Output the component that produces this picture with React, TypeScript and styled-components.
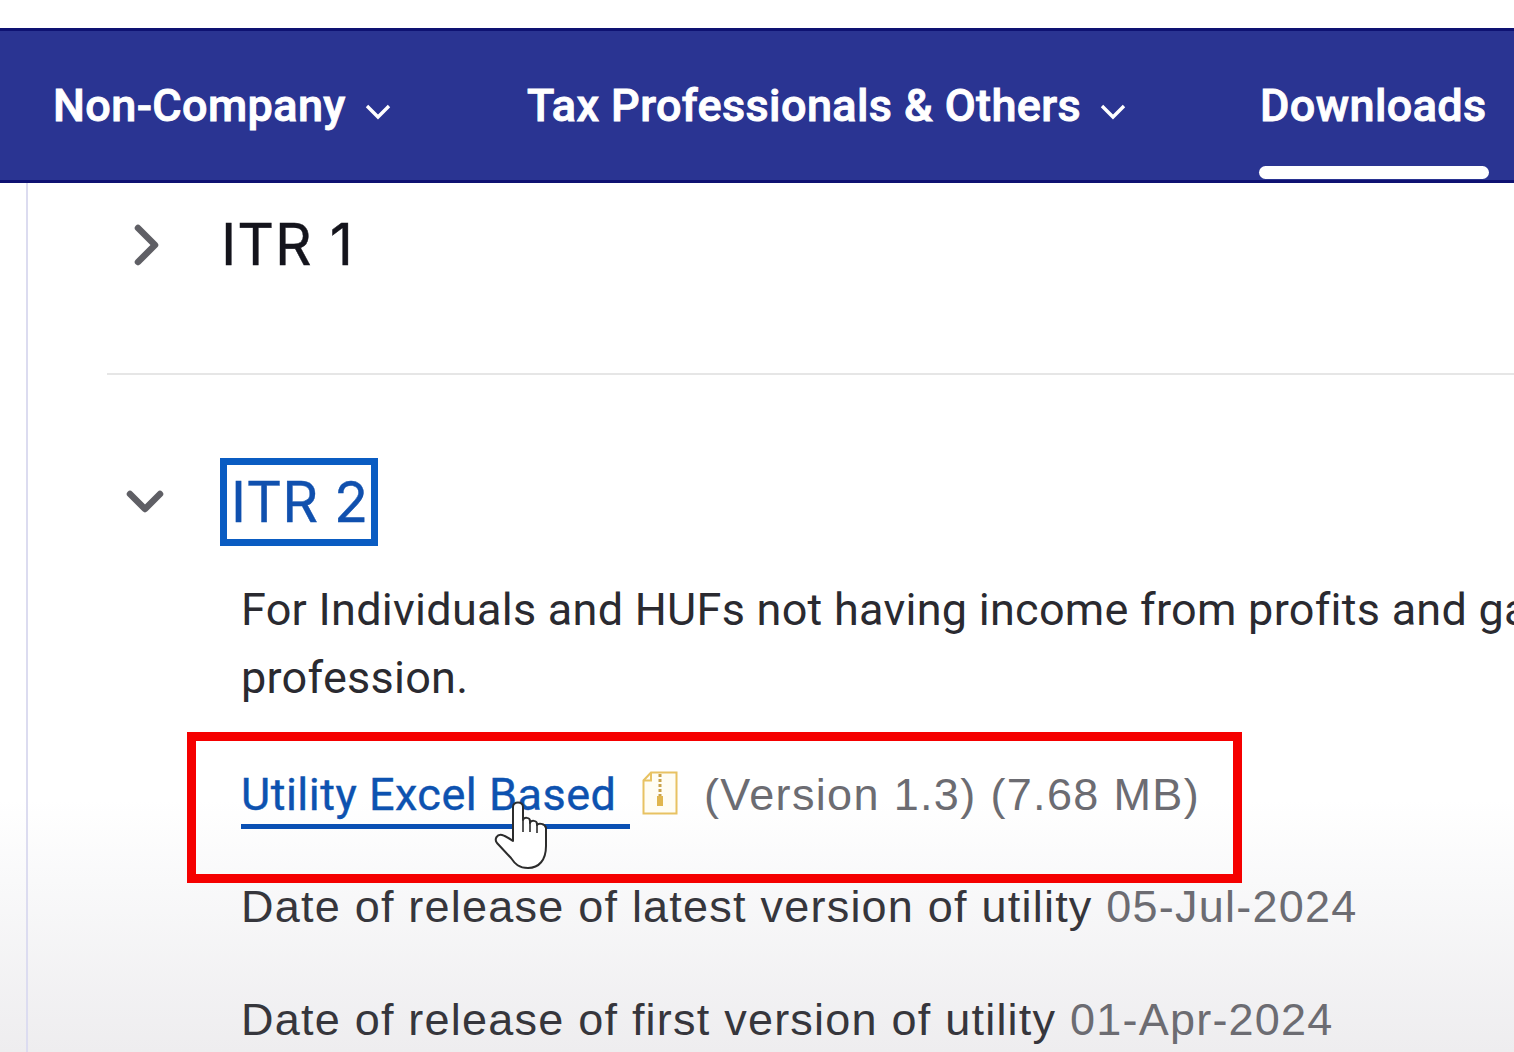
import styled, { createGlobalStyle } from "styled-components";

const navItems = [
  { label: "Non-Company", hasMenu: true, width: 474 },
  { label: "Tax Professionals & Others", hasMenu: true, width: 733 },
  { label: "Downloads", hasMenu: false, width: 230 },
];

export default function App() {
  return (
    <Page>
      <GlobalStyle />
      <Nav>
        {navItems.map((item) => (
          <NavItem key={item.label} $width={item.width} $active={!item.hasMenu}>
            {item.label}
            {item.hasMenu && (
              <NavChevron viewBox="0 0 28 18">
                <path d="M3 4l11 11L25 4" />
              </NavChevron>
            )}
          </NavItem>
        ))}
      </Nav>
      <Content>
        <ClosedRow>
          <RowIcon viewBox="0 0 40 50">
            <path d="M11 8l17 17-17 17" />
          </RowIcon>
          <Heading>ITR 1</Heading>
        </ClosedRow>
        <OpenRow>
          <RowIcon viewBox="0 0 40 50">
            <path d="M5 17l15 15 15-15" />
          </RowIcon>
          <FocusedHeading>ITR 2</FocusedHeading>
        </OpenRow>
        <Details>
          <Description>
            For Individuals and HUFs not having income from profits and gains from business or profession.
          </Description>
          <UtilityLine>
            <UtilityLink>Utility Excel Based</UtilityLink>
            <ZipIcon viewBox="0 0 36 44">
              <path d="M9 1.5h25.5v41h-33V9.5z" fill="#fffdf4" stroke="#e8c262" strokeWidth="2" />
              <path d="M9 1.5v8H1.5" fill="none" stroke="#e8c262" strokeWidth="2" />
              <path d="M18 3v22" stroke="#c9a24a" strokeWidth="3" strokeDasharray="3 2" />
              <rect x="15" y="25" width="6" height="10" fill="#e0b64f" />
            </ZipIcon>
            <Version>(Version 1.3) (7.68 MB)</Version>
            <Cursor viewBox="0 0 56 68">
              <path
                d="M19 40V6c0-6 10-6 10 0v13c1-3 7-3 7 1v2c1-3 7-3 7 1v1c1-2 8-2 9 3v18c0 14-7 22-18 22-9 0-13-4-17-10L3 42c-3-4 0-9 5-8 4 1 8 4 11 6z"
                fill="#fff"
                stroke="#2c2c2c"
                strokeWidth="2"
                strokeLinejoin="round"
              />
              <path d="M29 19v12M36 22v9M43 24v8" stroke="#2c2c2c" strokeWidth="1.6" fill="none" />
            </Cursor>
          </UtilityLine>
          <DateLine>
            Date of release of latest version of utility <DateValue>05-Jul-2024</DateValue>
          </DateLine>
          <DateLine>
            Date of release of first version of utility <DateValue>01-Apr-2024</DateValue>
          </DateLine>
        </Details>
        <Highlight />
      </Content>
    </Page>
  );
}

const GlobalStyle = createGlobalStyle`
  html, body {
    margin: 0;
    background: #fff;
  }
  body {
    font-family: Roboto, "Liberation Sans", sans-serif;
  }
`;

const Page = styled.div`
  width: 1514px;
  height: 1052px;
  padding-top: 28px;
  box-sizing: border-box;
  overflow: hidden;
  background: linear-gradient(to bottom, #fff 0, #fff 800px, #f9f9fa 880px, #eeedef 1052px);
`;

const Nav = styled.nav`
  display: flex;
  height: 155px;
  box-sizing: border-box;
  padding-left: 53px;
  background: #2a3492;
  border-top: 3px solid #0e1272;
  border-bottom: 3px solid #0e1272;
`;

const NavItem = styled.div<{ $width: number; $active: boolean }>`
  position: relative;
  flex: 0 0 ${(p) => p.$width}px;
  display: flex;
  align-items: flex-start;
  padding-top: 50px;
  box-sizing: border-box;
  color: #fff;
  font-size: 45px;
  line-height: 50px;
  font-weight: 500;
  letter-spacing: 0.38px;
  white-space: nowrap;
  -webkit-text-stroke: 0.9px #fff;

  ${(p) =>
    p.$active &&
    `
    &::after {
      content: "";
      position: absolute;
      left: -1px;
      bottom: 1px;
      width: 230px;
      height: 13px;
      border-radius: 7px;
      background: #fff;
    }
  `}
`;

const NavChevron = styled.svg`
  width: 28px;
  height: 18px;
  margin: 21px 0 0 18px;

  path {
    fill: none;
    stroke: #fff;
    stroke-width: 3.4;
  }
`;

const Content = styled.main`
  position: relative;
  margin-left: 26px;
  height: 869px;
  border-left: 2px solid #dcdcf0;
  box-sizing: border-box;
  padding-left: 79px;
`;

const ClosedRow = styled.div`
  display: flex;
  align-items: center;
  height: 192px;
  padding: 0 0 66px 20px;
  box-sizing: border-box;
  border-bottom: 2px solid #e6e6e6;
  gap: 54px;
`;

const OpenRow = styled.div`
  display: flex;
  align-items: center;
  margin: 83px 0 0 18px;
  gap: 55px;
`;

const RowIcon = styled.svg`
  width: 40px;
  height: 50px;
  flex: none;

  path {
    fill: none;
    stroke: #5f5f65;
    stroke-width: 6.5;
    stroke-linecap: round;
    stroke-linejoin: round;
  }
`;

const Heading = styled.h2`
  margin: 0;
  font-family: Inter, Roboto, sans-serif;
  font-size: 57px;
  line-height: 64px;
  font-weight: 400;
  letter-spacing: 1px;
  color: #14141c;
  -webkit-text-stroke: 0.4px currentColor;
`;

const FocusedHeading = styled(Heading)`
  width: 158px;
  height: 88px;
  box-sizing: border-box;
  border: 7px solid #0a5cc2;
  padding: 5px 0 0 4px;
  font-size: 56px;
  letter-spacing: 0;
  color: #1050ae;
  white-space: nowrap;
  overflow: hidden;
`;

const Details = styled.div`
  margin-left: 134px;
  width: 1900px;
`;

const Description = styled.p`
  margin: 30px 0 0;
  font-size: 45px;
  line-height: 68px;
  letter-spacing: 0.26px;
  max-width: 1740px;
  color: #2a2a30;
`;

const UtilityLine = styled.div`
  position: relative;
  display: flex;
  align-items: center;
  margin-top: 48px;
  height: 80px;
`;

const UtilityLink = styled.a`
  display: block;
  width: 389px;
  height: 62px;
  box-sizing: border-box;
  border-bottom: 5px solid #0a50b4;
  margin-top: -5px;
  font-size: 45px;
  line-height: 56px;
  font-weight: 400;
  letter-spacing: 0.5px;
  color: #0d52b0;
  white-space: nowrap;
  -webkit-text-stroke: 0.4px currentColor;
`;

const ZipIcon = styled.svg`
  width: 36px;
  height: 44px;
  margin: -14px 0 0 12px;
  flex: none;
`;

const Version = styled.span`
  margin: -10px 0 0 26px;
  font-family: "Liberation Sans", Arial, sans-serif;
  font-size: 45px;
  letter-spacing: 1.34px;
  color: #6c6c72;
  white-space: nowrap;
`;

const Cursor = styled.svg`
  position: absolute;
  left: 253px;
  top: 41px;
  width: 56px;
  height: 68px;
`;

const DateLine = styled.p`
  margin: 39px 0 0;
  font-family: "Liberation Sans", Arial, sans-serif;
  font-size: 45px;
  line-height: 56px;
  letter-spacing: 1.22px;
  color: #36363c;
  white-space: nowrap;

  & + & {
    margin-top: 57px;
  }
`;

const DateValue = styled.span`
  color: #6c6c72;
`;

const Highlight = styled.div`
  position: absolute;
  left: 159px;
  top: 549px;
  width: 1055px;
  height: 151px;
  box-sizing: border-box;
  border: 9px solid #f50000;
  pointer-events: none;
`;
